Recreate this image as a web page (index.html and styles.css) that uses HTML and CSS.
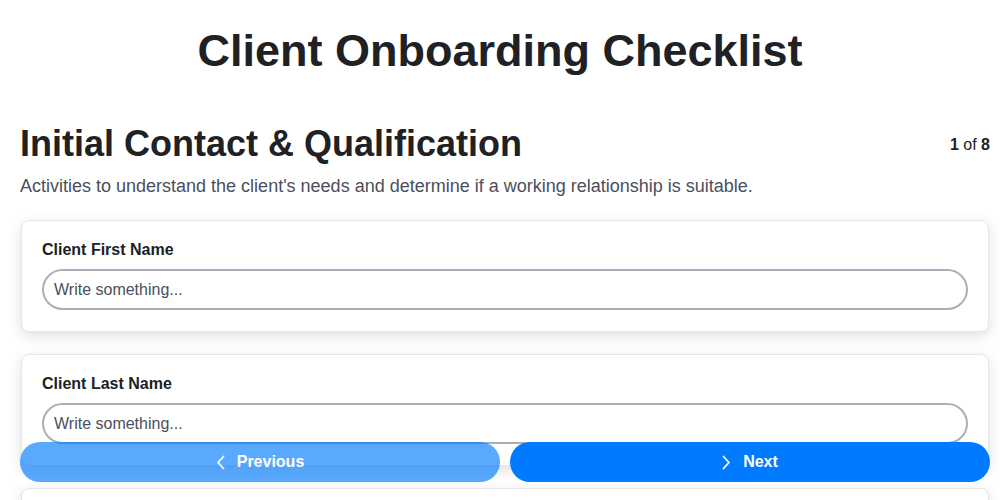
FILE: index.html
```html
<!DOCTYPE html>
<html lang="en">
<head>
<meta charset="utf-8">
<title>Client Onboarding Checklist</title>
<link rel="stylesheet" href="styles.css">
</head>
<body>
<main class="page">
  <h1 class="title">Client Onboarding Checklist</h1>
  <div class="section">
    <div class="section-head">
      <h2 class="section-title">Initial Contact &amp; Qualification</h2>
      <div class="progress"><strong>1</strong> of <strong>8</strong></div>
    </div>
    <p class="section-desc">Activities to understand the client's needs and determine if a working relationship is suitable.</p>

    <div class="cards">
      <div class="card">
        <label class="field-label" for="first">Client First Name</label>
        <input class="field-input" id="first" type="text" placeholder="Write something...">
      </div>
      <div class="card">
        <label class="field-label" for="last">Client Last Name</label>
        <input class="field-input" id="last" type="text" placeholder="Write something...">
      </div>
      <div class="card">
        <label class="field-label" for="email">Client Email</label>
        <input class="field-input" id="email" type="text" placeholder="Write something...">
      </div>
    </div>
  </div>
</main>

<nav class="nav-bar">
  <button class="nav-btn nav-prev" type="button">
    <svg class="chev" width="9" height="15" viewBox="0 0 9 15" aria-hidden="true"><path d="M7.5 1.5 L2 7.5 L7.5 13.5" fill="none" stroke="currentColor" stroke-width="1.8" stroke-linecap="round" stroke-linejoin="round"/></svg>
    <span>Previous</span>
  </button>
  <button class="nav-btn nav-next" type="button">
    <svg class="chev" width="9" height="15" viewBox="0 0 9 15" aria-hidden="true"><path d="M1.5 1.5 L7 7.5 L1.5 13.5" fill="none" stroke="currentColor" stroke-width="1.8" stroke-linecap="round" stroke-linejoin="round"/></svg>
    <span>Next</span>
  </button>
</nav>
</body>
</html>
```

FILE: styles.css
```css
* { box-sizing: border-box; }

html, body {
  margin: 0;
  background: #ffffff;
}

body {
  font-family: "Liberation Sans", Arial, sans-serif;
  color: #1f1f1f;
}

.page {
  padding: 0 10px;
}

.title {
  margin: 25px 0 0;
  font-size: 45px;
  font-weight: 700;
  line-height: 52px;
  text-align: center;
  color: #202124;
}

.section {
  margin-left: 10px;
}

.section-head {
  margin-top: 46px;
  display: flex;
  justify-content: space-between;
  align-items: center;
}

.section-title {
  margin: 0;
  font-size: 36px;
  line-height: 42px;
  font-weight: 700;
  color: #202124;
}

.progress {
  font-size: 16px;
  color: #202124;
  padding-top: 2px;
}

.progress strong { font-weight: 700; }

.section-desc {
  margin: 11px 0 0;
  font-size: 18px;
  line-height: 21px;
  color: #4a4f5c;
}

.cards {
  margin-top: 23px;
  display: flex;
  flex-direction: column;
  gap: 22px;
  padding-right: 1px;
  padding-left: 1px;
}

.card {
  background: #ffffff;
  border: 1px solid #e6e6ea;
  border-radius: 8px;
  padding: 19px 20px 21px;
  box-shadow: 0 4px 14px rgba(0, 0, 0, 0.13);
  display: flex;
  flex-direction: column;
}

.field-label {
  font-size: 16px;
  font-weight: 700;
  line-height: 20px;
  color: #202124;
  margin-bottom: 9px;
}

.field-input {
  height: 41px;
  border: 2px solid #a7b0ba;
  border-radius: 21px;
  padding: 0 10px;
  font-family: "Liberation Sans", Arial, sans-serif;
  font-size: 16px;
  color: #333;
  background: #fff;
  outline: none;
}

.field-input::placeholder {
  color: #4a4f5c;
  opacity: 1;
}

.nav-bar {
  position: fixed;
  left: 20px;
  right: 10px;
  bottom: 18px;
  display: flex;
  gap: 10px;
}

.nav-btn {
  flex: 1;
  height: 40px;
  border: none;
  border-radius: 20px;
  background: #007bff;
  color: #ffffff;
  font-family: "Liberation Sans", Arial, sans-serif;
  font-size: 16px;
  font-weight: 700;
  display: flex;
  align-items: center;
  justify-content: center;
  gap: 12px;
  cursor: pointer;
}

.nav-prev {
  opacity: 0.65;
}

.chev { display: block; }
```
